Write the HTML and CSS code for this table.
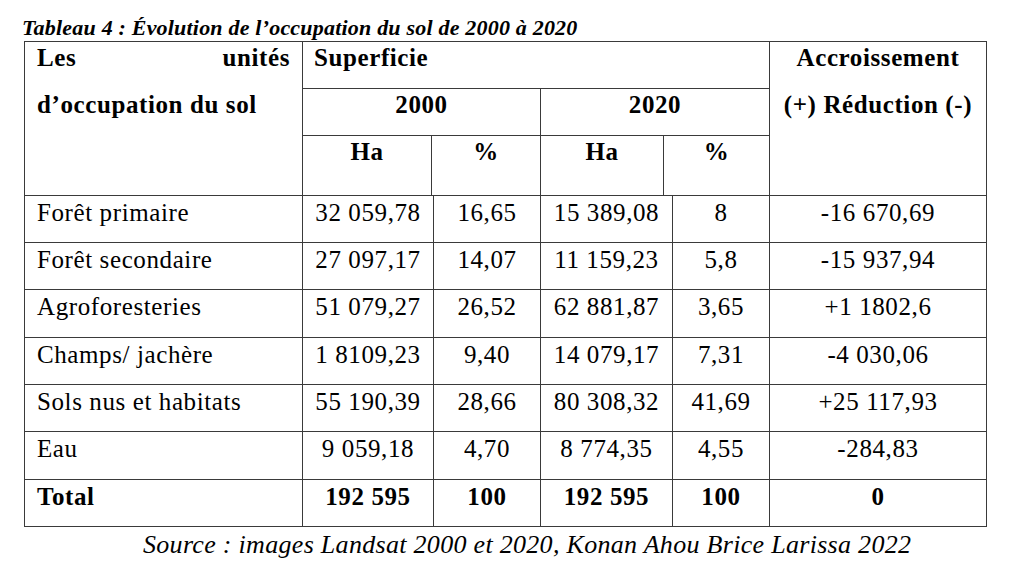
FILE: index.html
```html
<!DOCTYPE html>
<html lang="fr">
<head>
<meta charset="utf-8">
<title>Tableau 4</title>
<link rel="stylesheet" href="styles.css">
</head>
<body>
<div class="page">
  <p class="caption">Tableau 4 : Évolution de l’occupation du sol de 2000 à 2020</p>
  <div class="table">
    <div class="thead">
      <div class="cell h-unit">
        <div class="line justify"><span>Les</span><span>unités</span></div>
        <div class="line">d’occupation du sol</div>
      </div>
      <div class="cell h-sup">Superficie</div>
      <div class="cell h-acc">
        <div class="line">Accroissement</div>
        <div class="line">(+) Réduction (-)</div>
      </div>
      <div class="cell h-y1">2000</div>
      <div class="cell h-y2">2020</div>
      <div class="cell h-sub">Ha</div>
      <div class="cell h-sub">%</div>
      <div class="cell h-sub">Ha</div>
      <div class="cell h-sub">%</div>
    </div>
    <div class="tbody">
      <div class="cell name">Forêt primaire</div>
      <div class="cell num">32 059,78</div>
      <div class="cell num">16,65</div>
      <div class="cell num">15 389,08</div>
      <div class="cell num">8</div>
      <div class="cell num">-16 670,69</div>

      <div class="cell name">Forêt secondaire</div>
      <div class="cell num">27 097,17</div>
      <div class="cell num">14,07</div>
      <div class="cell num">11 159,23</div>
      <div class="cell num">5,8</div>
      <div class="cell num">-15 937,94</div>

      <div class="cell name">Agroforesteries</div>
      <div class="cell num">51 079,27</div>
      <div class="cell num">26,52</div>
      <div class="cell num">62 881,87</div>
      <div class="cell num">3,65</div>
      <div class="cell num">+1 1802,6</div>

      <div class="cell name">Champs/ jachère</div>
      <div class="cell num">1 8109,23</div>
      <div class="cell num">9,40</div>
      <div class="cell num">14 079,17</div>
      <div class="cell num">7,31</div>
      <div class="cell num">-4 030,06</div>

      <div class="cell name">Sols nus et habitats</div>
      <div class="cell num">55 190,39</div>
      <div class="cell num">28,66</div>
      <div class="cell num">80 308,32</div>
      <div class="cell num">41,69</div>
      <div class="cell num">+25 117,93</div>

      <div class="cell name">Eau</div>
      <div class="cell num">9 059,18</div>
      <div class="cell num">4,70</div>
      <div class="cell num">8 774,35</div>
      <div class="cell num">4,55</div>
      <div class="cell num">-284,83</div>

      <div class="cell name total">Total</div>
      <div class="cell num total">192 595</div>
      <div class="cell num total">100</div>
      <div class="cell num total">192 595</div>
      <div class="cell num total">100</div>
      <div class="cell num total">0</div>
    </div>
  </div>
  <p class="source">Source : images Landsat 2000 et 2020, Konan Ahou Brice Larissa 2022</p>
</div>
</body>
</html>
```

FILE: styles.css
```css
* { box-sizing: border-box; }
html, body { margin: 0; padding: 0; background: #ffffff; }
body {
  font-family: "Liberation Serif", "Times New Roman", serif;
  color: #000;
  width: 1024px;
  height: 576px;
  overflow: hidden;
}
.page {
  padding: 15px 0 0 24px;
}
.caption {
  margin: 0 0 0 -2px;
  font-size: 22px;
  line-height: 26px;
  letter-spacing: 0.2px;
  font-weight: bold;
  font-style: italic;
  height: 26px;
}
.table {
  width: 963px;
  border-left: 1px solid #3a3a3a;
  border-top: 1px solid #3a3a3a;
  font-size: 25px;
  letter-spacing: 0.6px;
}
.cell {
  border-right: 1px solid #3a3a3a;
  border-bottom: 1px solid #3a3a3a;
  line-height: 29px;
  white-space: nowrap;
}
.thead {
  display: grid;
  grid-template-columns: 278px 129px 109px 123px 106px 217px;
  grid-template-rows: 47px 47px 60px;
  font-weight: bold;
}
.thead .cell { padding-top: 1px; text-align: center; }
.h-unit { grid-row: 1 / 4; grid-column: 1; padding: 1px 12px 0 12px; }
.thead .h-unit { text-align: left; }
.h-unit .line, .h-acc .line { height: 47px; }
.justify { display: flex; justify-content: space-between; }
.h-sup { grid-row: 1; grid-column: 2 / 6; }
.thead .h-sup { text-align: left; padding-left: 11px; }
.h-acc { grid-row: 1 / 4; grid-column: 6; }
.h-y1 { grid-row: 2; grid-column: 2 / 4; }
.h-y2 { grid-row: 2; grid-column: 4 / 6; }
.h-sub { grid-row: 3; }
.tbody {
  display: grid;
  grid-template-columns: 278px 131px 107px 132px 97px 217px;
  grid-template-rows: 47px 47px 48px 47px 47px 48px 47px;
}
.tbody .cell { padding-top: 2px; }
.name { padding-left: 12px; }
.num { text-align: center; }
.total { font-weight: bold; }
.source {
  margin: 3px 0 0 119px;
  font-size: 26px;
  line-height: 30px;
  letter-spacing: 0.3px;
  font-style: italic;
}
```
